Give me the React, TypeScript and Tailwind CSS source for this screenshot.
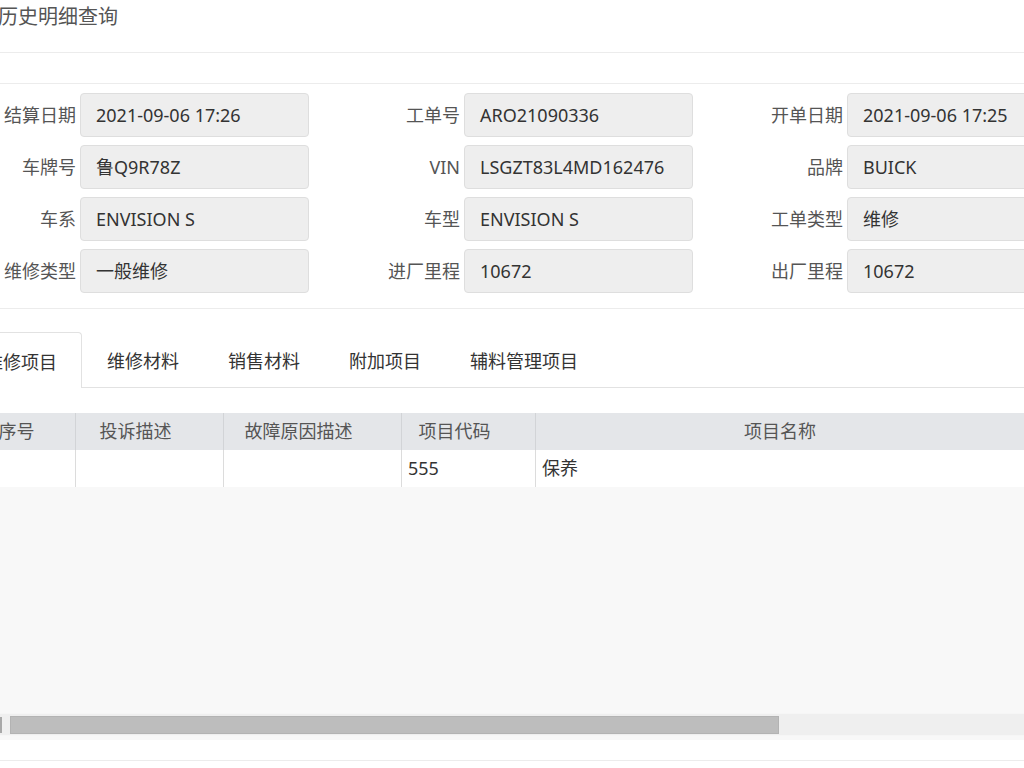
const FONT = '"Noto Sans", "Noto Sans CJK SC", sans-serif'

const FIELDS = [
  [
    ['结算日期', '2021-09-06 17:26'],
    ['工单号', 'ARO21090336'],
    ['开单日期', '2021-09-06 17:25'],
  ],
  [
    ['车牌号', '鲁Q9R78Z'],
    ['VIN', 'LSGZT83L4MD162476'],
    ['品牌', 'BUICK'],
  ],
  [
    ['车系', 'ENVISION S'],
    ['车型', 'ENVISION S'],
    ['工单类型', '维修'],
  ],
  [
    ['维修类型', '一般维修'],
    ['进厂里程', '10672'],
    ['出厂里程', '10672'],
  ],
]

const TABS = ['维修项目', '维修材料', '销售材料', '附加项目', '辅料管理项目']

const COLS = [
  { title: '序号', w: 'w-[90px]', value: '' },
  { title: '投诉描述', w: 'w-[148px]', value: '' },
  { title: '故障原因描述', w: 'w-[178px]', value: '' },
  { title: '项目代码', w: 'w-[134px]', value: '555' },
  { title: '项目名称', w: 'w-[516px]', value: '保养' },
]

function Field({ label, value, width }: { label: string; value: string; width: string }) {
  return (
    <div className={`flex items-center ${width}`}>
      <div className="w-[80px] shrink-0 pr-[4px] text-right text-[18px] text-[#555]">{label}</div>
      <div className="h-[44px] w-[229px] shrink-0 flex items-center rounded-[4px] border border-[#dedede] bg-[#eeeeee] pl-[15px] text-[18px] text-[#333] whitespace-nowrap">
        {value}
      </div>
    </div>
  )
}

export default function App() {
  return (
    <div className="w-[1024px] h-[768px] overflow-hidden bg-white" style={{ fontFamily: FONT }}>
      {/* title */}
      <div className="h-[53px] border-b border-[#ececec] pt-[4px]">
        <div className="-ml-[2px] text-[20px] leading-[26px] text-[#555]">历史明细查询</div>
      </div>
      <div className="h-[31px] border-b border-[#ececec]" />

      {/* info form */}
      <div className="flex flex-col gap-[8px] pt-[9px] pb-[15px] border-b border-[#ececec] w-[1160px]">
        {FIELDS.map((row, i) => (
          <div key={i} className="flex">
            <Field label={row[0][0]} value={row[0][1]} width="w-[384px]" />
            <Field label={row[1][0]} value={row[1][1]} width="w-[383px]" />
            <Field label={row[2][0]} value={row[2][1]} width="w-[384px]" />
          </div>
        ))}
      </div>

      {/* tabs */}
      <div className="mt-[23px] -ml-[40px] flex h-[56px] w-[1100px]">
        {TABS.map((t, i) => (
          <div
            key={t}
            className={
              i === 0
                ? 'flex items-center pt-[4px] px-[24px] border border-b-0 border-[#e2e2e2] rounded-t-[4px] text-[18px] text-[#333] bg-white'
                : 'flex items-center pt-[4px] pl-[25px] pr-[24px] border-b border-[#e2e2e2] text-[18px] text-[#333]'
            }
          >
            {t}
          </div>
        ))}
        <div className="flex-1 border-b border-[#e2e2e2]" />
      </div>

      {/* table */}
      <div className="mt-[25px] bg-[#f8f8f8] h-[327px] flex flex-col">
        <div className="-ml-[14px] flex w-[1100px] h-[37px] bg-[#e4e6e9]">
          {COLS.map((c, i) => (
            <div
              key={c.title}
              className={`${c.w} shrink-0 flex items-center justify-center pr-[28px] text-[18px] text-[#555] ${i < COLS.length - 1 ? 'border-r border-[#d2d4d7]' : ''}`}
            >
              {c.title}
            </div>
          ))}
        </div>
        <div className="-ml-[14px] flex w-[1100px] h-[37px] bg-white">
          {COLS.map((c, i) => (
            <div
              key={c.title}
              className={`${c.w} shrink-0 flex items-center pl-[6px] text-[18px] text-[#333] ${i < COLS.length - 1 ? 'border-r border-[#dcdcdc]' : ''}`}
            >
              {c.value}
            </div>
          ))}
        </div>
        <div className="flex-1" />
        {/* horizontal scrollbar */}
        <div className="mb-[4px] h-[23px] flex items-center bg-[#efefef] border-y border-[#f6f6f6]">
          <div className="w-[2px] h-[16px] bg-[#a8a8a8]" />
          <div className="ml-[8px] w-[769px] h-[18px] bg-[#bdbdbd] border border-[#b3b3b3]" />
        </div>
      </div>
      <div className="h-[21px] border-b border-[#ececec]" />
    </div>
  )
}
